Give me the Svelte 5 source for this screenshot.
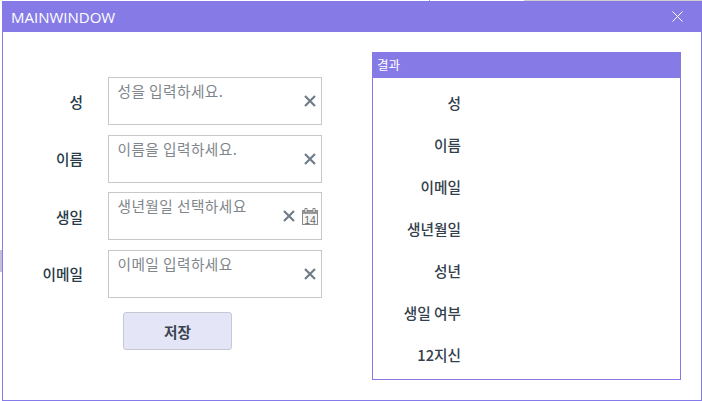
<script>
  const fields = [
    { label: '성', placeholder: '성을 입력하세요.' },
    { label: '이름', placeholder: '이름을 입력하세요.' },
    { label: '생일', placeholder: '생년월일 선택하세요', date: true },
    { label: '이메일', placeholder: '이메일 입력하세요' }
  ];
  const results = ['성', '이름', '이메일', '생년월일', '성년', '생일 여부', '12지신'];
</script>

<div class="backdrop" aria-hidden="true">
  <span class="top-tick"></span>
  <span class="top-line"></span>
  <span class="side-block"></span>
</div>

<div class="window">
  <header class="titlebar">
    <span class="title">MAINWINDOW</span>
    <svg class="close" width="11" height="11" viewBox="0 0 11 11" aria-hidden="true">
      <path d="M0.5 0.5L10.5 10.5M10.5 0.5L0.5 10.5" stroke="#fff" stroke-width="1" fill="none" />
    </svg>
  </header>
  <main class="content">
    <section class="form">
      {#each fields as f}
        <div class="row">
          <span class="label">{f.label}</span>
          <div class="input">
            <span class="placeholder">{f.placeholder}</span>
            <div class="icons">
              <svg width="12" height="12" viewBox="0 0 12 12" aria-hidden="true">
                <path d="M1 1L11 11M11 1L1 11" stroke="#6f7d8a" stroke-width="2.2" fill="none" />
              </svg>
              {#if f.date}
                <svg width="16" height="17" viewBox="0 0 16 17" aria-hidden="true">
                  <rect x="0.5" y="2.5" width="15" height="14" fill="#f6f6f6" stroke="#8a8a8a" />
                  <rect x="1" y="3" width="14" height="3" fill="#9a9a9a" />
                  <rect x="3" y="0.5" width="2" height="4" fill="#fff" stroke="#7a7a7a" stroke-width="0.8" />
                  <rect x="11" y="0.5" width="2" height="4" fill="#fff" stroke="#7a7a7a" stroke-width="0.8" />
                  <text x="8" y="15.5" text-anchor="middle" class="day">14</text>
                </svg>
              {/if}
            </div>
          </div>
        </div>
      {/each}
      <button class="save">저장</button>
    </section>
    <section class="panel">
      <div class="panel-head">결과</div>
      <div class="panel-body">
        {#each results as r}
          <div class="result">{r}</div>
        {/each}
      </div>
    </section>
  </main>
</div>

<style>
  :global(body) {
    margin: 0;
    background: #fff;
  }
  .backdrop span {
    position: absolute;
  }
  .top-tick {
    left: 429px;
    top: 0;
    width: 1px;
    height: 1px;
    background: #8fa8d8;
  }
  .top-line {
    left: 524px;
    top: 0;
    width: 178px;
    height: 1px;
    background: #cfcfcf;
  }
  .side-block {
    left: 0;
    top: 250px;
    width: 2px;
    height: 22px;
    background: #c6bedb;
  }
  .window {
    position: relative;
    box-sizing: border-box;
    width: 700px;
    height: 400px;
    margin: 1px 0 0 2px;
    border: 1px solid #867bea;
    border-top: 0;
    background: #fff;
    font-family: "Noto Sans CJK KR", "Noto Sans", sans-serif;
    display: flex;
    flex-direction: column;
  }
  .titlebar {
    flex: none;
    height: 31px;
    margin: 0 -1px;
    padding: 0 19px 0 9px;
    background: #867be6;
    color: #fff;
    display: flex;
    align-items: center;
    justify-content: space-between;
  }
  .title {
    font-family: "Open Sans", "Noto Sans", sans-serif;
    font-size: 15px;
  }
  .close {
    display: block;
  }
  .content {
    flex: 1;
    display: flex;
    align-items: flex-start;
    padding: 20px 0 0 0;
  }
  .form {
    width: 369px;
    flex: none;
    padding-top: 25px;
    box-sizing: border-box;
    display: flex;
    flex-direction: column;
  }
  .row {
    display: flex;
    align-items: center;
    height: 48px;
    margin-bottom: 9.6px;
  }
  .label {
    width: 80px;
    text-align: right;
    font-size: 14.67px;
    font-weight: 500;
    color: #263a48;
    margin-right: 25px;
    flex: none;
  }
  .input {
    box-sizing: border-box;
    width: 214px;
    height: 48px;
    border: 1px solid #c8c8c8;
    padding: 0 3px 0 9px;
    display: flex;
    justify-content: space-between;
    background: #fff;
  }
  .placeholder {
    font-size: 14.67px;
    line-height: 20px;
    margin-top: 3px;
    margin-left: -0.5px;
    color: #7f868c;
    letter-spacing: 0.45px;
  }
  .icons {
    display: flex;
    align-items: center;
    gap: 7px;
    height: 46px;
  }
  .icons svg:only-child {
    margin-right: 2px;
  }
  .day {
    font-family: "Liberation Sans", sans-serif;
    font-size: 10.5px;
    fill: #6e6e6e;
  }
  .save {
    box-sizing: border-box;
    width: 109px;
    height: 38px;
    margin: 5px 0 0 120px;
    background: #e5e5f8;
    border: 1px solid #c8c8d4;
    border-radius: 3px;
    font-family: inherit;
    font-size: 14.67px;
    font-weight: 700;
    color: #3a4450;
  }
  .panel {
    box-sizing: border-box;
    width: 309px;
    height: 328px;
    border: 1px solid #867be6;
    display: flex;
    flex-direction: column;
  }
  .panel-head {
    flex: none;
    height: 25px;
    padding-left: 4px;
    background: #867be6;
    color: #fff;
    font-size: 12.5px;
    line-height: 24px;
  }
  .panel-body {
    flex: 1;
    padding-top: 4px;
    display: flex;
    flex-direction: column;
  }
  .result {
    height: 42px;
    line-height: 41px;
    flex: none;
    width: 88px;
    text-align: right;
    font-size: 14.67px;
    font-weight: 500;
    color: #33404c;
  }
</style>
